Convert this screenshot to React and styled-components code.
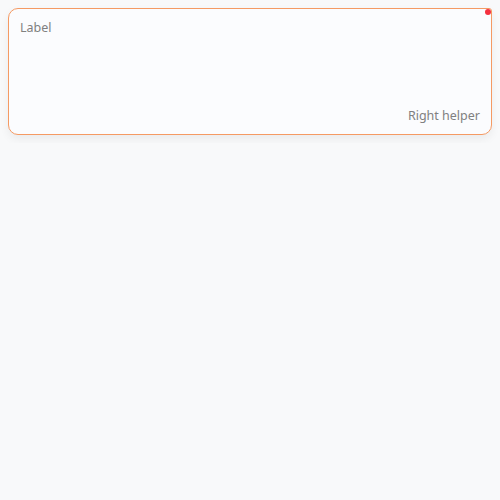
import styled, { createGlobalStyle } from "styled-components";

const Global = createGlobalStyle`
  html, body {
    margin: 0;
    background: #f8f9fa;
  }
  body {
    padding: 8px;
    font-family: "Noto Sans", "Open Sans", sans-serif;
  }
`;

const Field = styled.div`
  position: relative;
  box-sizing: border-box;
  height: 127px;
  display: flex;
  flex-direction: column;
  justify-content: space-between;
  padding: 10px 11px 9px 11px;
  background: #fbfcfe;
  border: 1px solid #f59a63;
  border-radius: 10px 3px 10px 10px;
  box-shadow: 0 4px 10px rgba(0, 0, 0, 0.06);
`;

const Label = styled.span`
  font-size: 12.5px;
  line-height: 18px;
  color: #808080;
`;

const Helper = styled.span`
  align-self: flex-end;
  font-size: 12.5px;
  line-height: 18px;
  color: #808080;
`;

const Dot = styled.span`
  position: absolute;
  top: 0px;
  right: 0px;
  width: 6px;
  height: 6px;
  border-radius: 50%;
  background: #f5303f;
`;

export default function App() {
  return (
    <>
      <Global />
      <Field>
        <Dot />
        <Label>Label</Label>
        <Helper>Right helper</Helper>
      </Field>
    </>
  );
}
